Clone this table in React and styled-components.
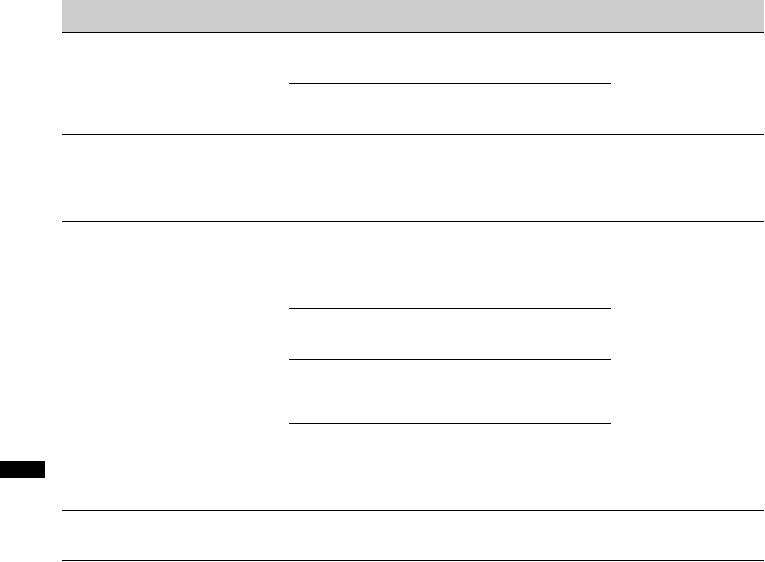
import React from 'react'
import styled, { createGlobalStyle } from 'styled-components'

const GlobalStyle = createGlobalStyle`
    html, body {
        margin: 0;
        padding: 0;
        background: #ffffff;
        font-family: "Liberation Sans", Arial, sans-serif;
    }
`;

const Page = styled.div`
    display: flex;
    width: 765px;
    height: 562px;
    overflow: hidden;
`;

const Margin = styled.div`
    width: 62px;
    flex-shrink: 0;
`;

const ThumbTab = styled.div`
    margin-top: 461px;
    width: 45px;
    height: 17px;
    background: #000000;
`;

const Table = styled.div`
    width: 702px;
    display: flex;
    flex-direction: column;
`;

const HeadRow = styled.div`
    box-sizing: border-box;
    height: 33px;
    background: #cccccc;
    border-bottom: 1px solid #000000;
`;

const Row = styled.div`
    box-sizing: border-box;
    display: grid;
    grid-template-columns: 227px 322px 153px;
    height: ${props => props.h}px;
    border-bottom: 1px solid #000000;
`;

const Cell = styled.div`
    display: flex;
    flex-direction: column;
`;

const SubCell = styled.div`
    box-sizing: border-box;
    height: ${props => props.h}px;
    border-bottom: ${props => props.last ? 'none' : '1px solid #000000'};
`;

// heights of the stacked parts in the middle column, per row
const rows = [
    { h: 102, parts: [51, 50] },
    { h: 87, parts: [] },
    { h: 289, parts: [87, 51, 64, 86] },
    { h: 50, parts: [] },
];

const App = () => {
    return (
        <>
            <GlobalStyle />
            <Page>
                <Margin>
                    <ThumbTab />
                </Margin>
                <Table>
                    <HeadRow />
                    {rows.map((row, index) => (
                        <Row key={index} h={row.h}>
                            <Cell />
                            <Cell>
                                {row.parts.map((p, i) => (
                                    <SubCell key={i} h={p} last={i === row.parts.length - 1} />
                                ))}
                            </Cell>
                            <Cell />
                        </Row>
                    ))}
                </Table>
            </Page>
        </>
    );
}

export default App;
